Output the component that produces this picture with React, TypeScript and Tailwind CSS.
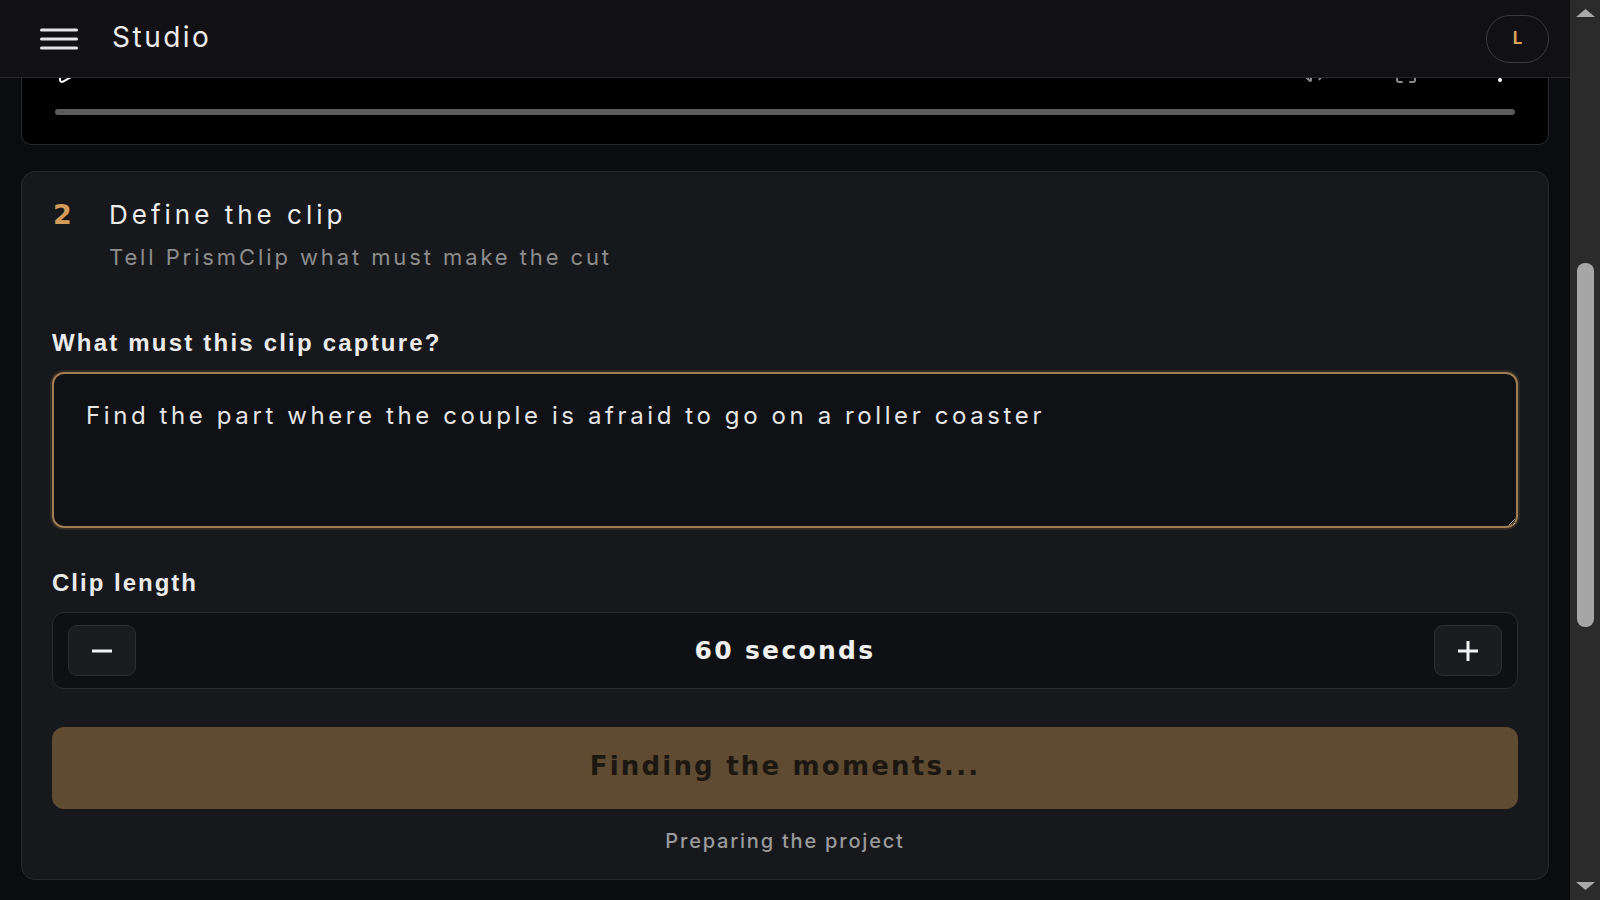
import { useState } from 'react'
import { Play, Volume2, Maximize, EllipsisVertical } from 'lucide-react'

function MenuIcon() {
  return (
    <svg width="38" height="22" viewBox="0 0 38 22" fill="none" stroke="#e4e4e4" strokeWidth="3" strokeLinecap="round">
      <path d="M1.5 2h35M1.5 11h35M1.5 20h35" />
    </svg>
  )
}

function MinusIcon() {
  return (
    <svg width="20" height="20" viewBox="0 0 20 20" fill="none" stroke="#f2f2f2" strokeWidth="3">
      <path d="M0 10h20" />
    </svg>
  )
}

function PlusIcon() {
  return (
    <svg width="20" height="20" viewBox="0 0 20 20" fill="none" stroke="#f2f2f2" strokeWidth="3">
      <path d="M0 10h20M10 0v20" />
    </svg>
  )
}

function Scrollbar() {
  return (
    <div className="flex w-[30px] shrink-0 flex-col items-center bg-[#2b2b2b] pt-[9px] pb-[10px]">
      <svg width="19" height="8" viewBox="0 0 19 8">
        <path d="M9.5 0L19 8H0z" fill="#a9a9a9" />
      </svg>
      <div className="mt-[246px] h-[364px] w-[17px] rounded-[8px] bg-[#a6a6a6]" />
      <div className="flex-1" />
      <svg width="19" height="8" viewBox="0 0 19 8">
        <path d="M0 0h19L9.5 8z" fill="#a9a9a9" />
      </svg>
    </div>
  )
}

export default function App() {
  const [prompt, setPrompt] = useState('Find the part where the couple is afraid to go on a roller coaster')
  const [seconds, setSeconds] = useState(60)

  return (
    <div className="flex h-screen w-full overflow-hidden bg-[#0b0c0e] font-['Inter',sans-serif]">
      <div className="flex min-w-0 flex-1 flex-col">
        {/* Top bar */}
        <header className="flex h-[78px] shrink-0 items-center border-b border-[#26272a] bg-[#111114] pl-[40px] pr-[21px]">
          <MenuIcon />
          <span className="ml-[34px] mb-[3px] text-[28px] leading-none tracking-[2.5px] text-[#ececec]">Studio</span>
          <div className="flex-1" />
          <div className="flex h-[48px] w-[63px] items-center justify-center rounded-full border-[1.5px] border-[#3a3a3a]">
            <span className="text-[17px] font-bold leading-none text-[#d9a05b]">L</span>
          </div>
        </header>

        <main className="flex-1 overflow-hidden px-[21px]">
          {/* Step 1, scrolled up under the bar */}
          <div className="flex h-[67px] flex-col justify-end overflow-hidden rounded-b-[10px] border-x border-b border-[#26282b] bg-black px-[33px] pb-[29px]">
            <div className="flex h-[24px] shrink-0 items-end">
              <Play size={24} className="text-white" />
              <div className="ml-auto flex items-end gap-[70px] pr-[3px] text-[#8a8a8a]">
                <Volume2 size={24} />
                <Maximize size={24} />
                <EllipsisVertical size={24} className="text-white" />
              </div>
            </div>
            <div className="mt-[24px] h-[6px] shrink-0 rounded-full bg-[#5b5b5b]" />
          </div>

          {/* Step 2 */}
          <section className="mt-[26px] rounded-[14px] border border-[#27292d] bg-[#16181b] px-[30px] pt-[29px] pb-[28px]">
            <div className="flex items-baseline">
              <span className="w-[57px] pl-[1px] font-['DejaVu_Sans',sans-serif] text-[27px] font-bold leading-none text-[#d39b5a]">2</span>
              <h2 className="text-[26px] leading-none tracking-[4px] text-[#ededed]">Define the clip</h2>
            </div>
            <p className="mt-[18px] pl-[57px] text-[22px] leading-none tracking-[2.9px] text-[#8d8d8d]">
              Tell PrismClip what must make the cut
            </p>

            <label className="mt-[63px] block font-['Liberation_Sans',sans-serif] text-[24px] font-bold leading-none tracking-[2.2px] text-[#ebebeb]">
              What must this clip capture?
            </label>
            <textarea
              value={prompt}
              onChange={(e) => setPrompt(e.target.value)}
              className="mt-[17px] block h-[156px] w-full rounded-[12px] border-2 border-[#a07d52] bg-[#0f1114] px-[32px] pt-[24px] font-['Inter',sans-serif] text-[24px] leading-[1.5] tracking-[3.6px] text-[#e6e6e6] shadow-[0_0_0_2px_rgba(160,125,82,0.18)] outline-none"
            />

            <label className="mt-[43px] block font-['Liberation_Sans',sans-serif] text-[24px] font-bold leading-none tracking-[2px] text-[#ebebeb]">
              Clip length
            </label>
            <div className="mt-[17px] flex h-[77px] items-center rounded-[12px] border border-[#2a2c30] bg-[#0f1013] px-[15px]">
              <button
                onClick={() => setSeconds((s) => Math.max(15, s - 15))}
                className="flex h-[51px] w-[68px] items-center justify-center rounded-[9px] border border-[#2b2d31] bg-[#1a1c1f]"
              >
                <MinusIcon />
              </button>
              <span className="flex-1 text-center font-['DejaVu_Sans',sans-serif] text-[25px] font-bold leading-none tracking-[2.3px] text-[#f0f0f0]">
                {seconds} seconds
              </span>
              <button
                onClick={() => setSeconds((s) => s + 15)}
                className="flex h-[51px] w-[68px] items-center justify-center rounded-[9px] border border-[#2b2d31] bg-[#1a1c1f]"
              >
                <PlusIcon />
              </button>
            </div>

            <button className="mt-[38px] flex h-[82px] w-full items-center justify-center rounded-[12px] bg-[#5e4b32] pb-[4px] font-['DejaVu_Sans',sans-serif] text-[26px] font-bold tracking-[2.2px] text-[#1c1710]">
              Finding the moments...
            </button>
            <p className="mt-[22px] text-center text-[20px] font-medium leading-none tracking-[1.8px] text-[#9b9b9b]">
              Preparing the project
            </p>
          </section>
        </main>
      </div>
      <Scrollbar />
    </div>
  )
}
